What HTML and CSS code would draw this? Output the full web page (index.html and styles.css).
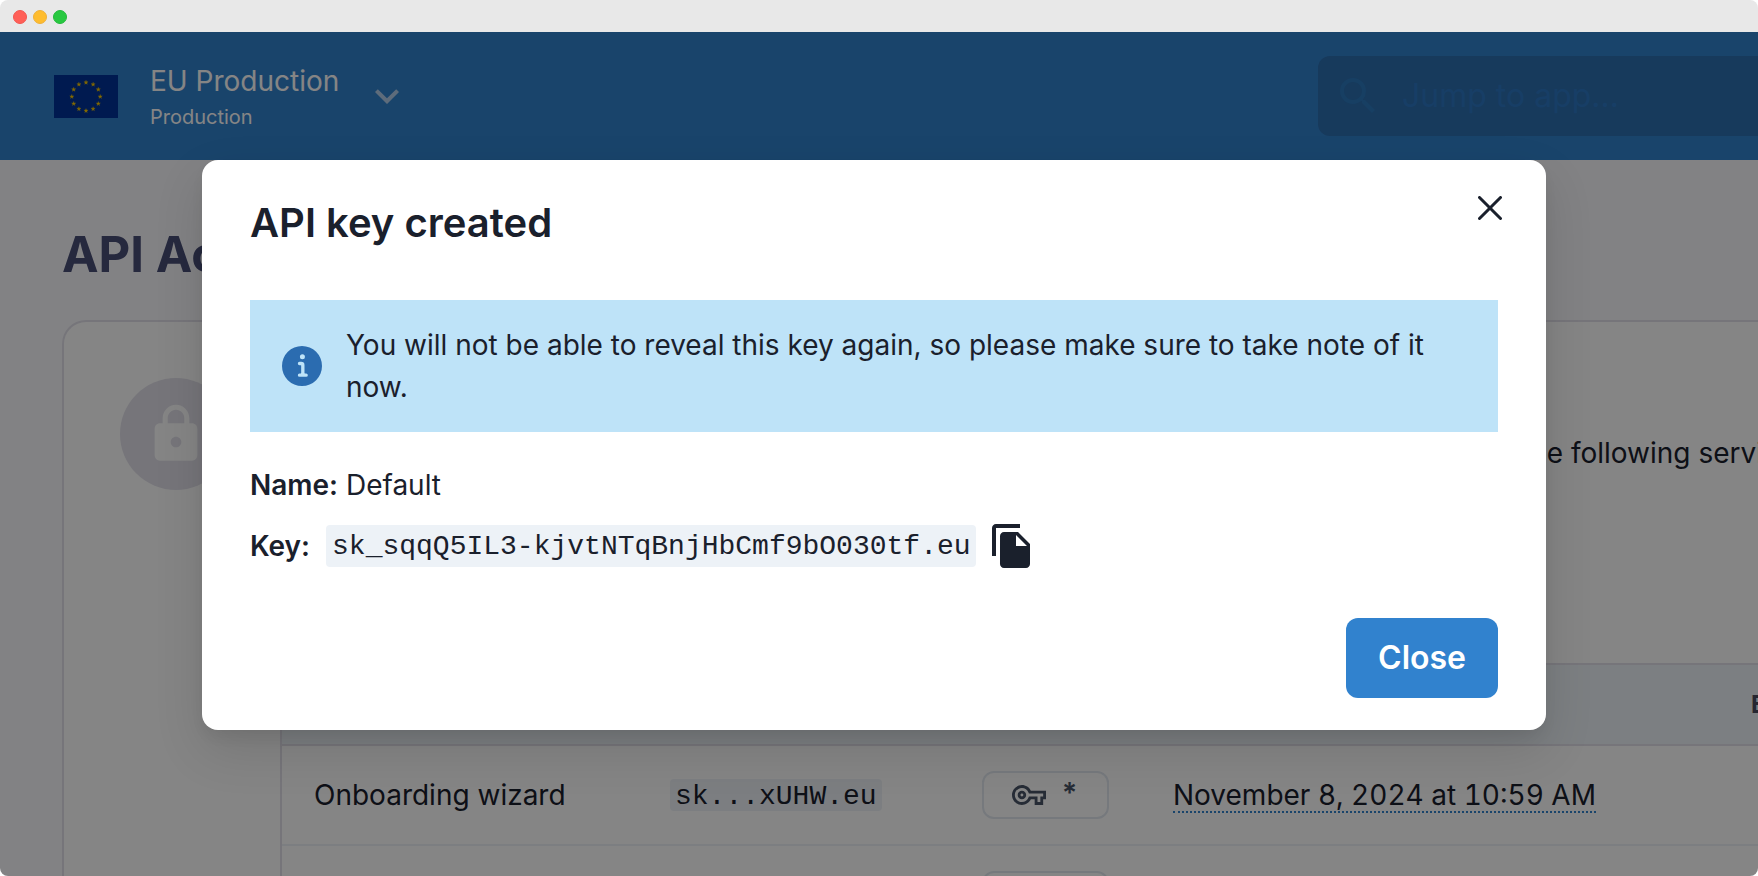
FILE: index.html
```html
<!DOCTYPE html>
<html lang="en">
<head>
<meta charset="utf-8">
<title>API Access</title>
<link rel="stylesheet" href="styles.css">
</head>
<body>
<div class="window">
  <div class="titlebar">
    <span class="dot dot-red"></span>
    <span class="dot dot-yellow"></span>
    <span class="dot dot-green"></span>
  </div>
  <div class="viewport">
    <div class="app">
      <header class="header">
        <button class="env" type="button">
          <svg class="flag" viewBox="0 0 64 43" aria-hidden="true">
            <defs><path id="star" d="M0-2.2 .5-.7 2.1-.7 .8 .3 1.3 1.8 0 .9-1.3 1.8-.8 .3-2.1-.7-.5-.7z"/></defs>
            <rect width="64" height="43" fill="#039"/>
            <g fill="#fc0" stroke="#fc0" stroke-width=".3">
              <use href="#star" x="32" y="7.5"/><use href="#star" x="39.1" y="9.4"/><use href="#star" x="44.3" y="14.5"/>
              <use href="#star" x="46.2" y="21.6"/><use href="#star" x="44.3" y="28.7"/><use href="#star" x="39.1" y="33.9"/>
              <use href="#star" x="32" y="35.8"/><use href="#star" x="24.9" y="33.9"/><use href="#star" x="19.7" y="28.7"/>
              <use href="#star" x="17.8" y="21.6"/><use href="#star" x="19.7" y="14.5"/><use href="#star" x="24.9" y="9.4"/>
            </g>
          </svg>
          <span class="env-text">
            <span class="env-name">EU Production</span>
            <span class="env-kind">Production</span>
          </span>
          <svg class="chevron" viewBox="0 0 24 24" aria-hidden="true"><path fill="currentColor" d="M16.59 8.59 12 13.17 7.41 8.59 6 10l6 6 6-6z"/></svg>
        </button>
        <label class="search">
          <svg class="search-icon" viewBox="0 0 24 24" aria-hidden="true"><path fill="currentColor" d="M15.5 14h-.79l-.28-.27A6.471 6.471 0 0 0 16 9.5 6.5 6.5 0 1 0 9.5 16c1.61 0 3.09-.59 4.23-1.57l.27.28v.79l5 4.99L20.49 19l-4.99-5zm-6 0C7.01 14 5 11.99 5 9.5S7.01 5 9.5 5 14 7.01 14 9.5 11.99 14 9.5 14z"/></svg>
          <input class="search-input" type="text" placeholder="Jump to app..." aria-label="Jump to app">
        </label>
      </header>
      <main class="main">
        <h1 class="page-title">API Access</h1>
        <section class="card">
          <div class="card-side">
            <span class="lock">
              <svg class="lock-icon" viewBox="0 0 24 24" aria-hidden="true"><path fill="currentColor" d="M18 8h-1V6c0-2.760-2.240-5-5-5S7 3.240 7 6v2H6c-1.100 0-2 .9-2 2v10c0 1.100.9 2 2 2h12c1.100 0 2-.9 2-2V10c0-1.100-.9-2-2-2zm-6 9c-1.100 0-2-.9-2-2s.9-2 2-2 2 .9 2 2-.9 2-2 2zm3.100-9H8.900V6c0-1.710 1.390-3.100 3.100-3.100s3.100 1.390 3.100 3.100v2z"/></svg>
            </span>
          </div>
          <div class="card-body">
            <p class="intro">the following services</p>
            <table class="keys">
              <colgroup><col class="col-name"><col class="col-key"><col class="col-scope"><col class="col-date"><col></colgroup>
              <thead><tr><th>Name</th><th>Key</th><th>Scope</th><th>Created</th><th>Expires</th></tr></thead>
              <tbody>
                <tr>
                  <td>Onboarding wizard</td>
                  <td><code class="code code-small">sk...xUHW.eu</code></td>
                  <td><span class="badge"><svg class="key-icon" viewBox="0 0 24 24" aria-hidden="true"><path fill="currentColor" d="M22 19h-6v-4h-2.680c-1.140 2.420-3.600 4-6.320 4-3.860 0-7-3.140-7-7s3.140-7 7-7c2.720 0 5.170 1.580 6.320 4H24v6h-2v4zm-4-2h2v-4h2v-2H11.940l-.23-.67C11.010 8.340 9.110 7 7 7c-2.760 0-5 2.240-5 5s2.240 5 5 5c2.110 0 4.010-1.340 4.710-3.330l.23-.67H18v4zM7 15c-1.650 0-3-1.350-3-3s1.350-3 3-3 3 1.350 3 3-1.350 3-3 3zm0-4c-.55 0-1 .45-1 1s.45 1 1 1 1-.45 1-1-.45-1-1-1z"/></svg><span class="badge-text">*</span></span></td>
                  <td><span class="date">November 8, 2024 at 10:59 AM</span></td>
                  <td></td>
                </tr>
                <tr><td></td><td></td><td><span class="badge"></span></td><td></td><td></td></tr>
              </tbody>
            </table>
          </div>
        </section>
      </main>
    </div>
    <div class="overlay">
      <div class="modal" role="dialog" aria-modal="true" aria-labelledby="modal-title">
        <div class="modal-head">
          <h2 class="modal-title" id="modal-title">API key created</h2>
          <button class="dismiss" type="button" aria-label="Dismiss">
            <svg class="dismiss-icon" viewBox="0 0 24 24" aria-hidden="true"><path fill="currentColor" d="M.439 21.440a1.500 1.500 0 1 0 2.122 2.121l9.262-9.261a.25.25 0 0 1 .354 0l9.262 9.263a1.500 1.500 0 1 0 2.122-2.121L14.300 12.177a.25.25 0 0 1 0-.354l9.263-9.262A1.500 1.500 0 0 0 21.439.44l-9.262 9.262a.25.25 0 0 1-.354 0L2.561.44A1.500 1.500 0 0 0 .439 2.561L9.700 11.823a.25.25 0 0 1 0 .354z"/></svg>
          </button>
        </div>
        <div class="alert" role="status">
          <svg class="alert-icon" viewBox="0 0 24 24" aria-hidden="true"><path fill="currentColor" d="M12 0a12 12 0 1 0 12 12A12.013 12.013 0 0 0 12 0zm.25 5a1.500 1.500 0 1 1-1.500 1.500 1.500 1.500 0 0 1 1.500-1.500zm2.250 13.500h-4a1 1 0 0 1 0-2h.75a.25.25 0 0 0 .25-.25v-4.500a.25.25 0 0 0-.25-.25h-.75a1 1 0 0 1 0-2h1a2 2 0 0 1 2 2v4.750a.25.25 0 0 0 .25.25h.75a1 1 0 1 1 0 2z"/></svg>
          <p class="alert-text">You will not be able to reveal this key again, so please make sure to take note of it now.</p>
        </div>
        <p class="field"><strong class="field-label">Name:</strong> Default</p>
        <div class="field field-key">
          <strong class="field-label">Key:</strong>
          <code class="code code-large">sk_sqqQ5IL3-kjvtNTqBnjHbCmf9bO030tf.eu</code>
          <button class="copy" type="button" aria-label="Copy key">
            <svg class="copy-icon" viewBox="0 0 24 24" aria-hidden="true"><path fill="currentColor" d="M16 1H4c-1.100 0-2 .9-2 2v14h2V3h12V1zm-1 4H8c-1.100 0-1.990.9-1.990 2L6 21c0 1.100.89 2 1.990 2H19c1.100 0 2-.9 2-2V11l-6-6zm-1 7V6.500l5.500 5.500H14z"/></svg>
          </button>
        </div>
        <div class="modal-foot"><button class="primary" type="button">Close</button></div>
      </div>
    </div>
  </div>
</div>
</body>
</html>
```
FILE: styles.css
```css
* { box-sizing: border-box; }
body {
  margin: 0;
  background: #fff;
  color: #1a202c;
  font: 28px/42px Inter, sans-serif;
}
h1, h2, p { margin: 0; }
button { font: inherit; color: inherit; border: 0; padding: 0; background: none; }
svg { display: block; flex: none; }

.window {
  display: flex;
  flex-direction: column;
  height: 100vh;
  overflow: hidden;
  border-radius: 8px;
}
.titlebar {
  display: flex;
  flex: none;
  align-items: center;
  gap: 6px;
  height: 32px;
  padding: 2px 13px 0;
  background: #e8e8e8;
}
.dot { width: 14px; height: 14px; border: 1px solid; border-radius: 50%; }
.dot-red { background: #ff5f57; border-color: #f25650; }
.dot-yellow { background: #febc2e; border-color: #eeb038; }
.dot-green { background: #28c840; border-color: #22b93a; }

.viewport { position: relative; flex: 1; overflow: hidden; }
.app { background: #fafafd; }

.header {
  display: flex;
  align-items: center;
  justify-content: space-between;
  height: 128px;
  padding-left: 54px;
  background: #3182ce;
  color: #fff;
}
.env { display: flex; align-items: center; text-align: left; }
.flag { width: 64px; height: 43px; }
.env-text { display: flex; flex-direction: column; padding: 6px 0 0 32px; }
.env-name { line-height: 36px; }
.env-kind { font-size: 20px; line-height: 36px; }
.chevron { width: 48px; height: 48px; margin-left: 24px; color: #b4cfec; }
.search {
  display: flex;
  align-items: center;
  width: 440px;
  height: 80px;
  padding-left: 16px;
  border-radius: 12px 0 0 12px;
  background: #2c6fb0;
  color: #2c79bf;
}
.search-icon { width: 48px; height: 48px; }
.search-input {
  flex: 1;
  min-width: 0;
  padding: 0 0 0 20px;
  border: 0;
  background: none;
  font: 32px/40px Inter, sans-serif;
}
.search-input::placeholder { color: #2c78c4; opacity: 1; }

.main { padding: 64px 0 0 62px; }
.page-title { font-size: 49px; line-height: 62px; font-weight: 700; color: #4a4f77; }
.card {
  display: flex;
  margin-top: 34px;
  border: 2px solid #e2e1ea;
  border-right: 0;
  border-radius: 24px 0 0 0;
  background: #fff;
}
.card-side { width: 216px; padding: 56px; flex: none; }
.lock {
  display: grid;
  place-items: center;
  width: 112px;
  height: 112px;
  border-radius: 50%;
  background: #e2e1ea;
  color: #fff;
}
.lock-icon { width: 64px; height: 64px; }
.card-body { flex: 1; min-width: 0; overflow: hidden; }
.intro { padding: 110px 0 189px 1241px; white-space: nowrap; }
.keys {
  width: 100%;
  min-width: 1700px;
  table-layout: fixed;
  border-collapse: separate;
  border-spacing: 0;
  border-left: 2px solid #e2e1ea;
}
.col-name { width: 356px; }
.col-key { width: 312px; }
.col-scope { width: 191px; }
.col-date { width: 578px; }
.keys th {
  height: 83px;
  padding: 0 0 0 32px;
  border-top: 2px solid #e2e1ea;
  border-bottom: 2px solid #e2e1ea;
  background: #edf4fa;
  color: #4a4a5e;
  font-size: 24px;
  line-height: 32px;
  font-weight: 700;
  text-align: left;
  text-transform: uppercase;
}
.keys td {
  height: 100px;
  padding: 0 0 0 32px;
  border-bottom: 2px solid #edf2f7;
  white-space: nowrap;
}
.code {
  padding: 2px 5px 0 6px;
  border-radius: 4px;
  background: #edf2f7;
  font: 28px/40px "Liberation Mono", monospace;
}
.code-small { display: block; width: fit-content; padding: 4px 5px 0; line-height: 28px; }
.badge {
  display: flex;
  align-items: center;
  gap: 16px;
  width: 127px;
  height: 48px;
  padding-left: 28px;
  border: 2px solid #e2e8f0;
  border-radius: 12px;
  color: #4a5568;
  font-size: 28px;
  line-height: 32px;
  font-weight: 600;
}
.badge-text { padding-bottom: 4px; }
.key-icon { width: 34px; height: 34px; }
.date {
  display: inline-block;
  border-bottom: 2px dotted #3182ce;
  line-height: 32px;
  font-variant-numeric: tabular-nums;
}

.overlay {
  position: absolute;
  inset: 0;
  padding: 128px 10px 0 0;
  background: rgba(0, 0, 0, 0.48);
}
.modal {
  width: 1344px;
  max-width: 100%;
  margin: 0 auto;
  padding: 32px 48px;
  border-radius: 16px;
  background: #fff;
  box-shadow: 0 20px 50px rgba(0, 0, 0, 0.12), 0 8px 16px -4px rgba(0, 0, 0, 0.08);
}
.modal-head { display: flex; justify-content: space-between; padding-bottom: 46px; }
.modal-title { font-size: 40px; line-height: 62px; font-weight: 600; }
.dismiss { display: grid; place-items: center; width: 64px; height: 32px; margin-right: -24px; }
.dismiss-icon { width: 24px; height: 24px; }
.alert { display: flex; align-items: center; gap: 24px; padding: 24px 32px; background: #bee3f8; }
.alert-icon { width: 40px; height: 40px; color: #2b6cb0; }
.field { padding-top: 32px; }
.field-label { font-weight: 600; }
.field-key { display: flex; align-items: center; padding-top: 16px; }
.code-large { margin: 0 12px 0 16px; }
.copy-icon { width: 48px; height: 48px; }
.modal-foot { display: flex; justify-content: flex-end; padding-top: 48px; }
.primary {
  height: 80px;
  padding: 0 32px;
  border-radius: 12px;
  background: #3182ce;
  color: #fff;
  font-size: 32px;
  line-height: 40px;
  font-weight: 600;
}
```
